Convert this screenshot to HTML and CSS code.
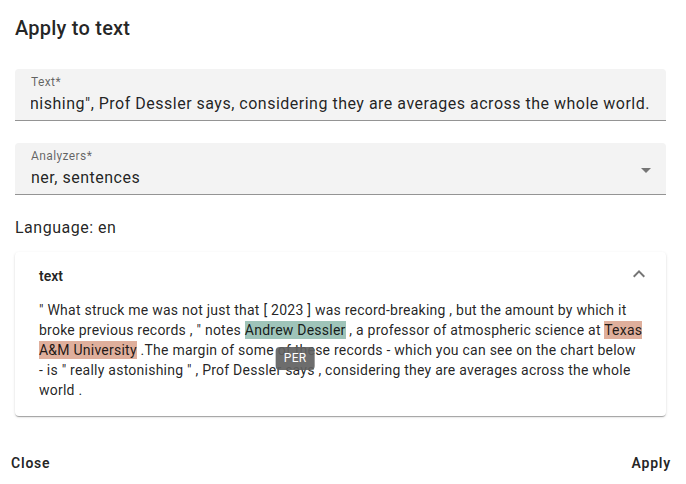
FILE: index.html
```html
<!DOCTYPE html>
<html lang="en">
<head>
    <meta charset="UTF-8">
    <meta name="viewport" content="width=device-width, initial-scale=1.0">
    <title>Apply to text</title>
    <link rel="stylesheet" href="styles.css">
</head>
<body>
    <div class="dialog">
        <h2 class="dialog-title">Apply to text</h2>

        <div class="field">
            <div class="field-body">
                <label class="field-label">Text*</label>
                <div class="field-value scrolled">
                    <span>" What struck me was not just that [2023] was record-breaking, but the amount by which it broke previous records," notes Andrew Dessler, a professor of atmospheric science at Texas A&amp;M University. The margin of some of these records - which you can see on the chart below - is "really astonishing", Prof Dessler says, considering they are averages across the whole world.</span>
                </div>
            </div>
        </div>

        <div class="field select">
            <div class="field-body">
                <label class="field-label">Analyzers*</label>
                <div class="field-value">ner, sentences</div>
            </div>
            <svg class="field-icon" viewBox="0 0 24 24" width="24" height="24"><path d="M7 10l5 5 5-5z"/></svg>
        </div>

        <p class="language">Language: en</p>

        <div class="result-card">
            <div class="result-header">
                <span class="result-name">text</span>
                <svg class="result-toggle" viewBox="0 0 24 24" width="24" height="24"><path d="M12 8l-6 6 1.41 1.41L12 10.83l4.59 4.58L18 14z"/></svg>
            </div>
            <p class="result-text">" What struck me was not just that [ 2023 ] was record-breaking , but the amount by which it broke previous records , " notes <span class="entity per">Andrew Dessler<span class="tooltip">PER</span></span> , a professor of atmospheric science at <span class="entity org">Texas A&amp;M University</span> .The margin of some of these records - which you can see on the chart below <span class="nowrap">- is</span> " really astonishing " , Prof Dessler says , considering they are averages across the whole world .</p>
        </div>
    </div>

    <div class="actions">
        <button class="btn">Close</button>
        <button class="btn">Apply</button>
    </div>
</body>
</html>
```

FILE: styles.css
```css
body {
    margin: 0;
    padding-top: 12px;
    font-family: Roboto, "Liberation Sans", Arial, sans-serif;
    color: rgba(0, 0, 0, 0.87);
    background: white;
}
.dialog {
    padding: 0 20px 0 15px;
}
.dialog-title {
    margin: 0;
    font-size: 20px;
    font-weight: 500;
    line-height: 32px;
    letter-spacing: 0.23px;
}
.field {
    display: flex;
    align-items: center;
    margin-top: 25px;
    padding: 7px 8px 7px 16px;
    background: #f3f3f3;
    border-bottom: 1px solid #949494;
    border-radius: 4px 4px 0 0;
}
.field.select {
    margin-top: 22px;
}
.field-body {
    flex: 1;
    min-width: 0;
}
.field-label {
    display: block;
    font-size: 12px;
    line-height: 12px;
    letter-spacing: 0.4px;
    color: rgba(0, 0, 0, 0.6);
}
.field-value {
    margin-top: 6px;
    font-size: 16px;
    line-height: 19px;
    letter-spacing: 0.5px;
    white-space: nowrap;
}
.scrolled {
    display: flex;
    justify-content: flex-end;
    overflow: hidden;
    margin-right: 8px;
}
.field-icon {
    fill: #757575;
    margin-top: 2px;
}
.language {
    margin: 21px 0 0;
    font-size: 16px;
    line-height: 24px;
    letter-spacing: 0.5px;
}
.result-card {
    margin-top: 12px;
    padding: 14px 20px 16px 24px;
    border-radius: 4px;
    background: white;
    box-shadow: 0px 2px 1px -1px rgba(0, 0, 0, 0.2), 0px 1px 1px 0px rgba(0, 0, 0, 0.14), 0px 1px 3px 0px rgba(0, 0, 0, 0.12);
}
.result-header {
    display: flex;
    align-items: center;
    justify-content: space-between;
    height: 20px;
}
.result-name {
    font-size: 14px;
    font-weight: 600;
    line-height: 20px;
}
.result-toggle {
    fill: #757575;
    margin-right: -5px;
    margin-top: -4px;
}
.result-text {
    margin: 14px 0 0;
    font-size: 14px;
    line-height: 20px;
    letter-spacing: 0.24px;
}
.nowrap {
    white-space: nowrap;
}
.entity {
    position: relative;
    padding: 1px 0;
}
.per {
    background: #9fc4b9;
}
.org {
    background: #dfaf9c;
}
.tooltip {
    position: absolute;
    top: calc(100% + 8px);
    left: 50%;
    transform: translateX(-50%);
    padding: 4px 8px;
    border-radius: 4px;
    background: rgba(97, 97, 97, 0.92);
    color: white;
    font-size: 12px;
    line-height: 15px;
    letter-spacing: 0.3px;
    white-space: nowrap;
}
.actions {
    display: flex;
    justify-content: space-between;
    margin-top: 29px;
    padding: 0 7px 0 3px;
}
.btn {
    border: none;
    background: none;
    padding: 6px 8px;
    font-family: inherit;
    font-size: 14px;
    font-weight: 600;
    line-height: 24px;
    letter-spacing: 0.8px;
    color: rgba(0, 0, 0, 0.87);
}
```
